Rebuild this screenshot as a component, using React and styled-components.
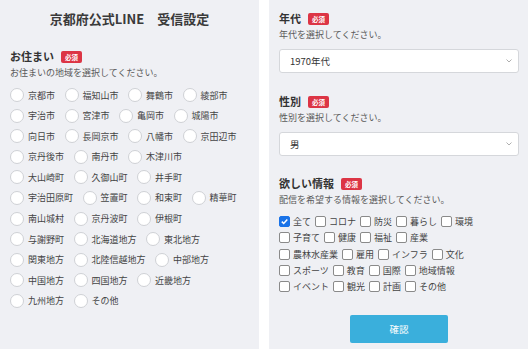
import React from "react";
import styled, { createGlobalStyle } from "styled-components";

const GlobalStyle = createGlobalStyle`
  body {
    margin: 0;
    background: #ffffff;
    font-family: "Noto Sans CJK JP", "Noto Sans", sans-serif;
    color: #333333;
  }
`;

const Page = styled.div`
  display: flex;
  gap: 10px;
  width: 529px;
  height: 350px;
`;

const Panel = styled.div`
  width: 259px;
  height: 349px;
  background: #eff0f4;
  box-sizing: border-box;
  padding: ${(p) => p.$pad};
  display: flex;
  flex-direction: column;
`;

const Title = styled.h1`
  margin: 0;
  font-size: 13px;
  line-height: 18px;
  font-weight: 700;
  text-align: center;
  color: #3a3a3a;
`;

const HeadingRow = styled.div`
  display: flex;
  align-items: center;
  gap: 7px;
  margin-top: ${(p) => p.$top || 0}px;
  height: 16px;
`;

const Heading = styled.span`
  font-size: 11px;
  font-weight: 700;
  line-height: 16px;
  color: #333333;
`;

const Badge = styled.span`
  display: inline-flex;
  align-items: center;
  justify-content: center;
  width: 21px;
  height: 12px;
  border-radius: 2px;
  background: #dc3545;
  color: #ffffff;
  font-size: 6.5px;
  font-weight: 700;
  margin-top: 2px;
`;

const Sub = styled.div`
  font-size: 9px;
  line-height: 14px;
  color: #5a5a5a;
  margin-top: ${(p) => p.$top || 2}px;
`;

const RadioList = styled.div`
  display: flex;
  flex-direction: column;
  gap: 6.6px;
  margin-top: 8px;
`;

const ItemRow = styled.div`
  display: flex;
  align-items: center;
  gap: ${(p) => p.$gap}px;
  height: ${(p) => p.$h}px;
`;

const RadioItem = styled.label`
  display: flex;
  align-items: center;
  gap: 4px;
  font-size: 9px;
  color: #444444;
  white-space: nowrap;
`;

const Circle = styled.span`
  width: 12px;
  height: 12px;
  border-radius: 50%;
  border: 1px solid #cfd1d5;
  background: #ffffff;
  flex: none;
`;

const Select = styled.div`
  margin-top: ${(p) => p.$top}px;
  height: 24px;
  box-sizing: border-box;
  border: 1px solid #d5d7db;
  border-radius: 3px;
  background: #ffffff;
  display: flex;
  align-items: center;
  justify-content: space-between;
  padding: 0 6px 0 10px;
  font-size: 9.5px;
  color: #333333;
`;

const CheckList = styled.div`
  display: flex;
  flex-direction: column;
  gap: 3.25px;
  margin-top: 8px;
`;

const CheckItem = styled.label`
  display: flex;
  align-items: center;
  gap: 3px;
  font-size: 9px;
  color: #444444;
  white-space: nowrap;
`;

const Box = styled.span`
  width: 11px;
  height: 11px;
  box-sizing: border-box;
  border-radius: 2px;
  border: 1px solid ${(p) => (p.$on ? "#1a73e8" : "#8a8a8a")};
  background: ${(p) => (p.$on ? "#1a73e8" : "#ffffff")};
  display: flex;
  align-items: center;
  justify-content: center;
  flex: none;
`;

const Submit = styled.button`
  align-self: center;
  margin-top: 22px;
  width: 98px;
  height: 28px;
  border: none;
  border-radius: 2px;
  background: #3aafdc;
  color: #ffffff;
  font-family: inherit;
  font-size: 9.5px;
`;

const areas = [
  ["京都市", "福知山市", "舞鶴市", "綾部市"],
  ["宇治市", "宮津市", "亀岡市", "城陽市"],
  ["向日市", "長岡京市", "八幡市", "京田辺市"],
  ["京丹後市", "南丹市", "木津川市"],
  ["大山崎町", "久御山町", "井手町"],
  ["宇治田原町", "笠置町", "和束町", "精華町"],
  ["南山城村", "京丹波町", "伊根町"],
  ["与謝野町", "北海道地方", "東北地方"],
  ["関東地方", "北陸信越地方", "中部地方"],
  ["中国地方", "四国地方", "近畿地方"],
  ["九州地方", "その他"],
];

const topics = [
  ["全て", "コロナ", "防災", "暮らし", "環境"],
  ["子育て", "健康", "福祉", "産業"],
  ["農林水産業", "雇用", "インフラ", "文化"],
  ["スポーツ", "教育", "国際", "地域情報"],
  ["イベント", "観光", "計画", "その他"],
];

const Chevron = () => (
  <svg width="6" height="4" viewBox="0 0 6 4">
    <polyline points="0.5,0.5 3,3 5.5,0.5" fill="none" stroke="#9a9a9a" strokeWidth="0.8" />
  </svg>
);

const Check = () => (
  <svg width="9" height="9" viewBox="0 0 9 9">
    <polyline points="1.8,4.6 3.7,6.5 7.3,2.5" fill="none" stroke="#ffffff" strokeWidth="1.5" />
  </svg>
);

export default function App() {
  return (
    <>
      <GlobalStyle />
      <Page>
        <Panel $pad="10px 10px 0 10px">
          <Title>京都府公式LINE　受信設定</Title>
          <HeadingRow $top={20}>
            <Heading>お住まい</Heading>
            <Badge>必須</Badge>
          </HeadingRow>
          <Sub>お住まいの地域を選択してください。</Sub>
          <RadioList>
            {areas.map((row, i) => (
              <ItemRow key={i} $gap={9.5} $h={14}>
                {row.map((name) => (
                  <RadioItem key={name}>
                    <Circle />
                    {name}
                  </RadioItem>
                ))}
              </ItemRow>
            ))}
          </RadioList>
        </Panel>
        <Panel $pad="10px 9px 0 10px">
          <HeadingRow>
            <Heading>年代</Heading>
            <Badge>必須</Badge>
          </HeadingRow>
          <Sub>年代を選択してください。</Sub>
          <Select $top={7}>
            1970年代
            <Chevron />
          </Select>
          <HeadingRow $top={20}>
            <Heading>性別</Heading>
            <Badge>必須</Badge>
          </HeadingRow>
          <Sub>性別を選択してください。</Sub>
          <Select $top={7}>
            男
            <Chevron />
          </Select>
          <HeadingRow $top={19}>
            <Heading>欲しい情報</Heading>
            <Badge>必須</Badge>
          </HeadingRow>
          <Sub>配信を希望する情報を選択してください。</Sub>
          <CheckList>
            {topics.map((row, i) => (
              <ItemRow key={i} $gap={4} $h={13}>
                {row.map((name) => {
                  const on = i === 0 && name === "全て";
                  return (
                    <CheckItem key={name}>
                      <Box $on={on}>{on && <Check />}</Box>
                      {name}
                    </CheckItem>
                  );
                })}
              </ItemRow>
            ))}
          </CheckList>
          <Submit>確認</Submit>
        </Panel>
      </Page>
    </>
  );
}
